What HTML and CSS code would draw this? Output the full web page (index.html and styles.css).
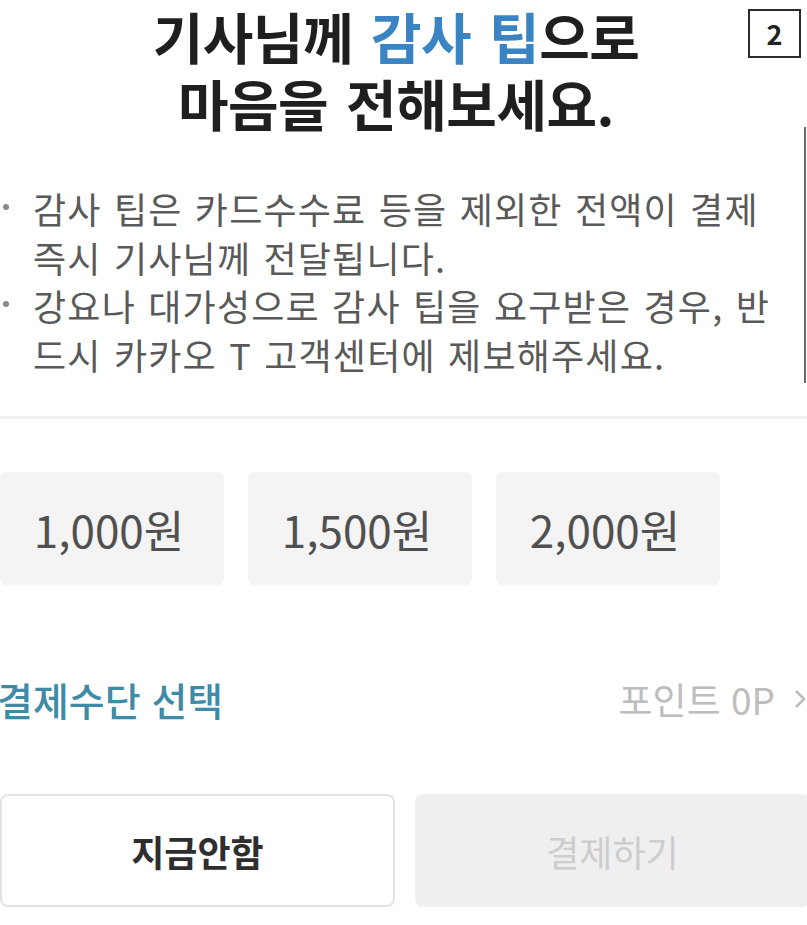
FILE: index.html
```html
<!DOCTYPE html>
<html lang="ko">
<head>
    <meta charset="UTF-8">
    <meta name="viewport" content="width=device-width, initial-scale=1.0">
    <title>감사 팁</title>
    <link rel="stylesheet" href="styles.css">
</head>
<body>
    <div class="sheet">
        <header class="head">
            <h1 class="title">기사님께 <span class="accent">감사 팁</span>으로<br>마음을 전해보세요.</h1>
            <div class="badge">2</div>
        </header>

        <div class="notice">
            <ul class="notes">
                <li><span class="dot"></span><p>감사 팁은 카드수수료 등을 제외한 전액이 결제 즉시 기사님께 전달됩니다.</p></li>
                <li><span class="dot"></span><p>강요나 대가성으로 감사 팁을 요구받은 경우, 반드시 카카오 T 고객센터에 제보해주세요.</p></li>
            </ul>
            <div class="scrollbar"></div>
        </div>

        <hr class="divider">

        <div class="amounts">
            <button class="amount">1,000원</button>
            <button class="amount">1,500원</button>
            <button class="amount">2,000원</button>
        </div>

        <div class="pay-row">
            <span class="pay-label">결제수단 선택</span>
            <span class="points">포인트 0P
                <svg class="chevron" width="14" height="24" viewBox="0 0 14 24"><path d="M3 4 L11 12 L3 20" fill="none" stroke="#bdbdbd" stroke-width="2.6"/></svg>
            </span>
        </div>

        <div class="actions">
            <button class="btn btn-skip">지금안함</button>
            <button class="btn btn-pay">결제하기</button>
        </div>
    </div>
</body>
</html>
```

FILE: styles.css
```css
body {
    margin: 0;
    background: #fff;
    font-family: "Noto Sans CJK KR", "Noto Sans", sans-serif;
    overflow: hidden;
}
.sheet {
    width: 812px;
}
.head {
    position: relative;
    padding-top: 2px;
}
.title {
    margin: 0;
    padding-right: 20px;
    text-align: center;
    font-size: 55px;
    font-weight: 700;
    line-height: 67px;
    letter-spacing: -0.5px;
    word-spacing: 3px;
    color: #1f1f1f;
}
.accent {
    color: #3b84c3;
}
.badge {
    position: absolute;
    top: 9px;
    left: 748px;
    width: 49px;
    height: 45px;
    border: 2px solid #2b2b2b;
    display: flex;
    align-items: center;
    justify-content: center;
    font-size: 27px;
    font-weight: 700;
    color: #222;
    background: #fff;
}
.notice {
    position: relative;
    width: 807px;
    padding: 48px 0 5px;
}
.scrollbar {
    position: absolute;
    top: -9px;
    bottom: 0;
    right: 1px;
    width: 2px;
    background: #6a6a6a;
}
.notes {
    list-style: none;
    margin: 0;
    padding: 0;
}
.notes li {
    display: flex;
}
.dot {
    flex: none;
    width: 6px;
    height: 6px;
    margin: 20px 24px 0 3px;
    border-radius: 50%;
    background: #8a8a8a;
}
.notes p {
    margin: 0;
    width: 765px;
    font-size: 36px;
    line-height: 48.5px;
    letter-spacing: 1.2px;
    word-spacing: 1px;
    color: #595959;
}
.divider {
    margin: 33px 0 0;
    width: 807px;
    height: 3px;
    border: 0;
    background: #efefef;
}
.amounts {
    display: flex;
    gap: 24px;
    margin-top: 53px;
}
.amount {
    width: 224px;
    height: 113px;
    border: 0;
    border-radius: 6px;
    background: #f4f4f4;
    font-family: inherit;
    font-size: 44px;
    color: #505050;
    padding: 0 6px 0 0;
}
.pay-row {
    display: flex;
    justify-content: space-between;
    align-items: center;
    width: 807px;
    margin-top: 89px;
    height: 50px;
}
.pay-label {
    margin-left: -3px;
    font-size: 39px;
    font-weight: 500;
    color: #3f8aa5;
}
.points {
    display: flex;
    align-items: center;
    gap: 18px;
    font-size: 37px;
    color: #bdbdbd;
}
.chevron {
    display: block;
}
.actions {
    display: flex;
    gap: 20px;
    margin-top: 70px;
}
.btn {
    width: 395px;
    height: 113px;
    border-radius: 8px;
    font-family: inherit;
    font-size: 36px;
}
.btn-skip {
    border: 2px solid #e3e3e3;
    background: #fff;
    color: #2e2e2e;
    font-weight: 700;
}
.btn-pay {
    border: 0;
    background: #efefef;
    color: #cdcdcd;
}
```
